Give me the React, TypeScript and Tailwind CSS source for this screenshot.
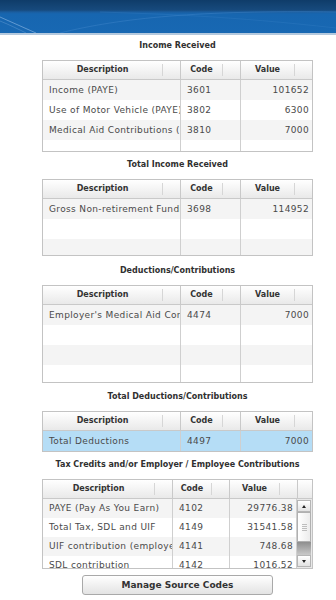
import React from "react";

type Row = { d: string; c: string; v: string };

const F = "font-['DejaVu_Sans',sans-serif]";

function HeaderCell({ label, w, last }: { label: string; w: string; last?: boolean }) {
  return (
    <div className={`${w} flex items-center h-full ${last ? "" : "border-r border-[#c9c9c9]"}`}>
      <div className="flex-1 text-center">{label}</div>
      <div className="w-px h-[12px] bg-[#d6d6d6] mr-[17px]" />
    </div>
  );
}

function Table({
  rows,
  bodyH,
  rowH,
  empty,
  widths,
  selected,
  scroll,
}: {
  rows: Row[];
  bodyH: string;
  rowH: string;
  empty: number;
  widths: [string, string];
  selected?: boolean;
  scroll?: boolean;
}) {
  const all: (Row | null)[] = [...rows, ...Array.from({ length: empty }, () => null)];
  return (
    <div className="w-[271px] border border-[#c3c3c3] bg-white">
      <div className="flex h-[19px] border-b border-[#c9c9c9] bg-[linear-gradient(to_bottom,#ffffff,#e9e9e9)] text-[8px] font-bold text-[#333]">
        <HeaderCell label="Description" w={widths[0]} />
        <HeaderCell label="Code" w={widths[1]} />
        <HeaderCell label="Value" w={scroll ? "w-[68px]" : "flex-1"} last={!scroll} />
        {scroll && <div className="flex-1" />}
      </div>
      <div className={`flex ${bodyH} overflow-hidden`}>
        <div className="flex-1 flex flex-col">
          {all.map((r, i) => (
            <div
              key={i}
              className={`flex shrink-0 ${rowH} ${
                selected ? "bg-[#b5ddf6]" : i % 2 === 0 ? "bg-[#f4f4f4]" : "bg-white"
              } text-[9px] tracking-[0.35px] text-[#4a4a4a] leading-none`}
            >
              <div className={`${widths[0]} border-r border-[#cfcfcf] flex items-center pl-[6px] overflow-hidden whitespace-nowrap`}>
                {r?.d}
              </div>
              <div className={`${widths[1]} border-r border-[#cfcfcf] flex items-center pl-[6px] overflow-hidden whitespace-nowrap`}>
                {r?.c}
              </div>
              <div className="flex-1 flex items-center justify-end pr-[3px] overflow-hidden whitespace-nowrap">
                {r?.v}
              </div>
            </div>
          ))}
        </div>
        {scroll && (
          <div className="w-[16px] flex flex-col bg-[#e8e8e8] border-l border-[#cfcfcf] py-[1px] pr-[1px]">
            <div className="h-[12px] border border-[#b5b5b5] bg-[linear-gradient(to_bottom,#ffffff,#e2e2e2)] flex items-center justify-center">
              <div className="w-0 h-0 border-l-[2.5px] border-r-[2.5px] border-b-[3px] border-l-transparent border-r-transparent border-b-[#222]" />
            </div>
            <div className="h-[30px] border border-[#b0b0b0] bg-[linear-gradient(to_right,#ffffff,#ececec)] flex flex-col items-center justify-center gap-[1px]">
              <div className="w-[5px] h-px bg-[#bdbdbd]" />
              <div className="w-[5px] h-px bg-[#bdbdbd]" />
              <div className="w-[5px] h-px bg-[#bdbdbd]" />
              <div className="w-[5px] h-px bg-[#bdbdbd]" />
            </div>
            <div className="flex-1 bg-[linear-gradient(to_bottom,#8e8e8e,#c9c9c9)]" />
            <div className="h-[12px] border border-[#b5b5b5] bg-[linear-gradient(to_bottom,#ffffff,#e2e2e2)] flex items-center justify-center">
              <div className="w-0 h-0 border-l-[2.5px] border-r-[2.5px] border-t-[3px] border-l-transparent border-r-transparent border-t-[#222]" />
            </div>
          </div>
        )}
      </div>
    </div>
  );
}

function Section({ title, children }: { title: string; children: React.ReactNode }) {
  return (
    <div className="flex flex-col items-center">
      <div className="h-[12px] leading-[12px] text-[8px] font-bold text-[#303030] mb-[8px] whitespace-nowrap">{title}</div>
      {children}
    </div>
  );
}

export default function App() {
  return (
    <div className={`w-[336px] h-[600px] overflow-hidden bg-white ${F}`}>
      <div className="relative h-[33px] bg-[linear-gradient(to_bottom,#0f3c69_0px,#174a7d_10px,#1a5d9f_12px,#1766b0_14px,#1868b3_33px)] overflow-hidden">
        <svg className="absolute left-0 top-0" width="336" height="33" viewBox="0 0 336 33">
          <path d="M0 17 C 12 22, 24 28, 36 33" stroke="#9cc3ea" strokeOpacity="0.55" strokeWidth="1" fill="none" />
          <path d="M0 21 C 10 25, 18 29, 26 33" stroke="#7fb0e0" strokeOpacity="0.35" strokeWidth="1" fill="none" />
          <path d="M60 33 C 120 18, 200 10, 336 12" stroke="#4d8fd0" strokeOpacity="0.35" strokeWidth="1" fill="none" />
          <path d="M100 12 C 160 14, 230 16, 336 28" stroke="#3f86cc" strokeOpacity="0.25" strokeWidth="1" fill="none" />
        </svg>
      </div>
      <div className="h-[2px] bg-[#b4c9de]" />
      <div className="pl-[42px] pt-[5px] w-[313px]">
        <Section title="Income Received">
          <Table
            widths={["w-[138px]", "w-[60px]"]}
            bodyH="h-[71px]"
            rowH="h-[20px]"
            empty={1}
            rows={[
              { d: "Income (PAYE)", c: "3601", v: "101652" },
              { d: "Use of Motor Vehicle (PAYE)", c: "3802", v: "6300" },
              { d: "Medical Aid Contributions (Fringe Benefit)", c: "3810", v: "7000" },
            ]}
          />
        </Section>
        <div className="h-[7px]" />
        <Section title="Total Income Received">
          <Table
            widths={["w-[138px]", "w-[60px]"]}
            bodyH="h-[56px]"
            rowH="h-[20px]"
            empty={2}
            rows={[{ d: "Gross Non-retirement Funding Income", c: "3698", v: "114952" }]}
          />
        </Section>
        <div className="h-[9px]" />
        <Section title="Deductions/Contributions">
          <Table
            widths={["w-[138px]", "w-[60px]"]}
            bodyH="h-[77px]"
            rowH="h-[20px]"
            empty={3}
            rows={[{ d: "Employer's Medical Aid Contributions", c: "4474", v: "7000" }]}
          />
        </Section>
        <div className="h-[8px]" />
        <Section title="Total Deductions/Contributions">
          <Table
            widths={["w-[138px]", "w-[60px]"]}
            bodyH="h-[20px]"
            rowH="h-[20px]"
            empty={0}
            selected
            rows={[{ d: "Total Deductions", c: "4497", v: "7000" }]}
          />
        </Section>
        <div className="h-[7px]" />
        <Section title="Tax Credits and/or Employer / Employee Contributions">
          <Table
            widths={["w-[130px]", "w-[57px]"]}
            bodyH="h-[69px]"
            rowH="h-[19px]"
            empty={0}
            scroll
            rows={[
              { d: "PAYE (Pay As You Earn)", c: "4102", v: "29776.38" },
              { d: "Total Tax, SDL and UIF", c: "4149", v: "31541.58" },
              { d: "UIF contribution (employee and employer)", c: "4141", v: "748.68" },
              { d: "SDL contribution", c: "4142", v: "1016.52" },
            ]}
          />
        </Section>
        <div className="flex justify-center mt-[6px]">
          <button className="w-[191px] h-[20px] rounded-[3px] border border-[#a9a9a9] bg-[linear-gradient(to_bottom,#ffffff,#e3e3e3)] text-[9px] font-bold text-[#333] leading-none">
            Manage Source Codes
          </button>
        </div>
      </div>
    </div>
  );
}
